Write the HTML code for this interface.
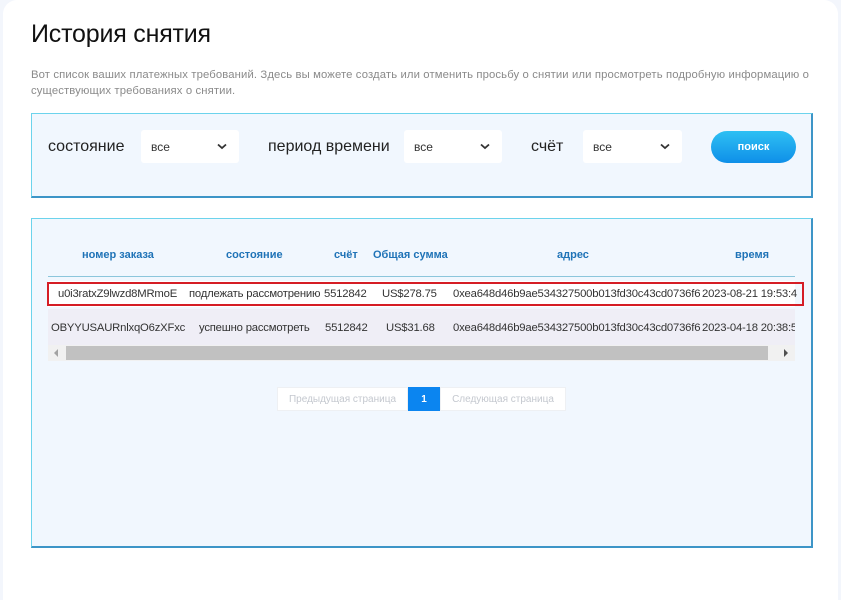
<!DOCTYPE html>
<html><head><meta charset="utf-8"><style>
*{margin:0;padding:0;box-sizing:border-box}
body{width:841px;height:600px;background:#f3f6fc;font-family:"Liberation Sans",sans-serif;position:relative;overflow:hidden}
.card{position:absolute;left:3px;top:0;width:835px;height:600px;background:#fff;border-radius:14px 14px 0 0}
.a{position:absolute;white-space:nowrap}
h1{position:absolute;left:31px;top:20px;font-size:25px;font-weight:normal;color:#111;letter-spacing:-0.2px}
.desc{left:31px;top:67px;font-size:11.3px;color:#8a8a8a;line-height:16px;letter-spacing:0.12px}
.box{position:absolute;left:31px;width:782px;background:#f1f7fe;border:1px solid #6cd3ec;border-bottom:2px solid #3d95c7;border-right:2px solid #3d95c7}
.lbl{font-size:16px;color:#222}
.sel{position:absolute;top:130px;height:33px;background:#fff;border-radius:3px;font-size:12px;color:#333;padding:10px 0 0 10px}
.sel svg{position:absolute;right:12px;top:13px}
.btn{left:711px;top:131px;width:85px;height:32px;border-radius:16px;background:linear-gradient(#2ec0f3,#0f8fe8);color:#fff;font-size:11px;font-weight:bold;text-align:center;line-height:32px}
.th{font-size:11px;font-weight:bold;color:#1f73b7;top:249px}
.td{font-size:11.3px;color:#333;letter-spacing:-0.2px}
.pg{position:absolute;top:387px;height:24px;font-size:10px;color:#c4c8cf;background:#fff;border:1px solid #eef0f3;text-align:center;line-height:23px}
</style></head><body>
<div class="card"></div>
<h1>История снятия</h1>
<div class="a desc">Вот список ваших платежных требований. Здесь вы можете создать или отменить просьбу о снятии или просмотреть подробную информацию о<br>существующих требованиях о снятии.</div>
<div class="box" style="top:113px;height:85px"></div>
<div class="a lbl" style="left:48px;top:138px">состояние</div>
<div class="sel" style="left:141px;width:98px">все<svg width="10" height="7"><path d="M1 1.5L5 5L9 1.5" stroke="#333" stroke-width="1.8" fill="none"/></svg></div>
<div class="a lbl" style="left:268px;top:138px">период времени</div>
<div class="sel" style="left:404px;width:98px">все<svg width="10" height="7"><path d="M1 1.5L5 5L9 1.5" stroke="#333" stroke-width="1.8" fill="none"/></svg></div>
<div class="a lbl" style="left:531px;top:138px">счёт</div>
<div class="sel" style="left:583px;width:99px">все<svg width="10" height="7"><path d="M1 1.5L5 5L9 1.5" stroke="#333" stroke-width="1.8" fill="none"/></svg></div>
<div class="a btn">поиск</div>

<div class="box" style="top:218px;height:330px"></div>
<div class="a th" style="left:82px">номер заказа</div>
<div class="a th" style="left:226px">состояние</div>
<div class="a th" style="left:334px">счёт</div>
<div class="a th" style="left:373px">Общая сумма</div>
<div class="a th" style="left:557px">адрес</div>
<div class="a th" style="left:735px">время</div>
<div class="a" style="left:48px;top:276px;width:747px;height:1px;background:#8cc6dc"></div>
<div class="a" style="left:48px;top:281px;width:747px;height:26px;background:#fff"></div>
<div class="a" style="left:48px;top:309px;width:747px;height:36px;background:#efeef6"></div>
<div class="a" style="left:47px;top:282px;width:757px;height:24px;border:2px solid #d51d25"></div>
<div class="a td" style="left:58px;top:288px">u0i3ratxZ9lwzd8MRmoE</div>
<div class="a td" style="left:189px;top:288px">подлежать рассмотрению</div>
<div class="a td" style="left:324px;top:288px">5512842</div>
<div class="a td" style="left:382px;top:288px">US$278.75</div>
<div class="a td" style="left:453px;top:288px">0xea648d46b9ae534327500b013fd30c43cd0736f6</div>
<div class="a td" style="left:702px;top:288px;width:100px;overflow:hidden">2023-08-21 19:53:4</div>
<div class="a td" style="left:51px;top:322px">OBYYUSAURnlxqO6zXFxc</div>
<div class="a td" style="left:199px;top:322px">успешно рассмотреть</div>
<div class="a td" style="left:325px;top:322px">5512842</div>
<div class="a td" style="left:386px;top:322px">US$31.68</div>
<div class="a td" style="left:453px;top:322px">0xea648d46b9ae534327500b013fd30c43cd0736f6</div>
<div class="a td" style="left:702px;top:322px;width:93px;overflow:hidden">2023-04-18 20:38:5</div>
<div class="a" style="left:48px;top:345px;width:747px;height:16px;background:#f1f1f1"></div>
<div class="a" style="left:66px;top:346px;width:702px;height:14px;background:#c1c1c1"></div>
<div class="a" style="left:54px;top:349px;width:0;height:0;border:4px solid transparent;border-right:4px solid #a3a3a3;border-left:0"></div>
<div class="a" style="left:784px;top:349px;width:0;height:0;border:4px solid transparent;border-left:4px solid #505050;border-right:0"></div>

<div class="pg" style="left:277px;width:131px">Предыдущая страница</div>
<div class="pg" style="left:408px;width:32px;background:#0b85f0;border-color:#0b85f0;color:#fff;font-weight:bold">1</div>
<div class="pg" style="left:440px;width:126px">Следующая страница</div>
</body></html>
